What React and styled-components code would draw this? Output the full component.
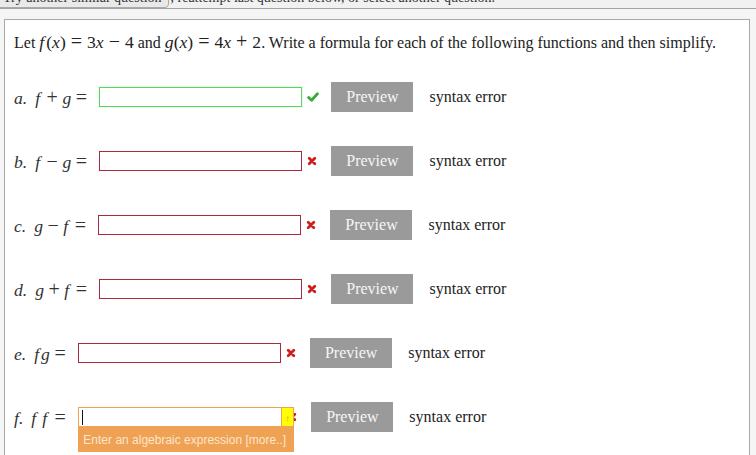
import React from 'react';
import styled, { createGlobalStyle } from 'styled-components';

const Global = createGlobalStyle`
  html, body { margin: 0; padding: 0; background: #f5f5f5; }
  body { font-family: "Liberation Serif", "Times New Roman", serif; overflow: hidden; }
`;

const Page = styled.div`
  width: 756px;
  height: 455px;
  overflow: hidden;
  background: #f5f5f5;
`;

const Strip = styled.div`
  height: 8px;
  overflow: hidden;
  border-bottom: 1px solid #a3a3a3;
  background: #f1f1f1;
  font-size: 14px;
  color: #333;
  white-space: nowrap;
`;

const StripLine = styled.div`
  margin-top: -12px;
  display: flex;
  align-items: center;
  line-height: 16px;
`;

const AgainButton = styled.span`
  border: 1px solid #aaa;
  border-radius: 4px;
  background: #e9e9e9;
  padding: 1px 6px;
  margin-left: -4px;
  margin-right: 2px;
`;

const Outer = styled.div`
  padding: 10px 6px 0 4px;
`;

const Box = styled.div`
  background: #fff;
  border: 1px solid #a8a8a8;
  border-bottom: none;
  padding: 11px 9px 0;
  height: 460px;
`;

const Question = styled.div`
  font-size: 16px;
  line-height: 20px;
  height: 20px;
  color: #222;
  white-space: nowrap;
`;

const Math = styled.span`
  font-size: 17.6px;
  line-height: 1;
  color: #222;
`;

const I = styled.i`
  font-style: italic;
  padding-right: ${(p) => p.$pr || 0}px;
`;

const Op = styled.span`
  font-size: 20px;
  line-height: 1;
  padding: 0 ${(p) => p.$sp ?? 4.5}px;
`;

const Rows = styled.div`
  margin-top: 31px;
  display: flex;
  flex-direction: column;
  gap: 34px;
`;

const Row = styled.div`
  display: flex;
  align-items: center;
  height: 30px;
`;

const Label = styled.span`
  font-size: 17.6px;
  line-height: 1;
  color: #333;
  margin-right: 8px;
  white-space: nowrap;
`;

const Letter = styled.i`
  font-style: italic;
  margin-right: 8px;
`;

const Field = styled.div`
  position: relative;
  width: ${(p) => p.$w || 203}px;
  height: 20px;
  box-sizing: border-box;
  background: #fff;
  border: 1px solid ${(p) => (p.$state === 'ok' ? '#5fd35f' : p.$state === 'focus' ? '#eda35a' : '#a8283c')};
  box-shadow: ${(p) => (p.$state === 'ok' ? '0 0 1px #8e8' : 'none')};
`;

const Cursor = styled.span`
  position: absolute;
  left: 3px;
  top: 2px;
  width: 1px;
  height: 15px;
  background: #111;
`;

const Yellow = styled.span`
  position: absolute;
  right: -13px;
  top: -1px;
  width: 12px;
  height: 20px;
  box-sizing: border-box;
  background: #ffff00;
  border: 1px solid #eda35a;
  border-left: none;
  z-index: 2;
  color: #e08a30;
  font-family: "Liberation Sans", sans-serif;
  font-size: 10px;
  line-height: 22px;
  text-align: center;
`;

const Tip = styled.div`
  position: absolute;
  left: -1px;
  top: 19px;
  width: 216px;
  height: 25px;
  box-sizing: border-box;
  background: #efa154;
  color: #fce6cc;
  font-family: "Liberation Sans", Arial, sans-serif;
  font-size: 12px;
  line-height: 26px;
  padding-left: 5px;
  white-space: nowrap;
  z-index: 3;
`;

const Mark = styled.span`
  width: 20px;
  margin-left: 5px;
  display: flex;
  align-items: center;
  height: 20px;
`;

const PreviewBtn = styled.button`
  margin-left: 4px;
  height: 30px;
  width: 82px;
  border: none;
  background: #9a9a9a;
  color: #f6f6f6;
  font-family: "Liberation Serif", serif;
  font-size: 16px;
  padding: 0;
`;

const Status = styled.span`
  margin-left: 16px;
  font-size: 16px;
  color: #222;
`;

const Check = () => (
  <svg width="12" height="10" viewBox="0 0 12 10">
    <path d="M1.6 5.4 L4.6 8.2 L10.4 1.8" fill="none" stroke="#3aaa3a" strokeWidth="2.8" strokeLinecap="round" strokeLinejoin="round" />
  </svg>
);

const Cross = () => (
  <svg width="10" height="10" viewBox="0 0 10 10">
    <path d="M2.2 2.2 L7.8 7.8 M7.8 2.2 L2.2 7.8" fill="none" stroke="#cc1f1f" strokeWidth="2.8" strokeLinecap="round" />
  </svg>
);

const F = ({ pr = 2 }) => <I $pr={pr}>f</I>;
const G = () => <I>g</I>;

const rows = [
  { key: 'a', expr: <><F /><Op>+</Op><G /><Op>=</Op></>, state: 'ok' },
  { key: 'b', expr: <><F /><Op>−</Op><G /><Op>=</Op></>, state: 'bad' },
  { key: 'c', expr: <><G /><Op>−</Op><F /><Op>=</Op></>, state: 'bad' },
  { key: 'd', expr: <><G /><Op>+</Op><F /><Op>=</Op></>, state: 'bad' },
  { key: 'e', expr: <><F /><G /><Op>=</Op></>, state: 'bad' },
  { key: 'f', expr: <><F pr={6} /><F pr={3} /><Op>=</Op></>, state: 'focus' },
];

export default function App() {
  return (
    <Page>
      <Global />
      <Strip>
        <StripLine>
          <AgainButton>Try another similar question</AgainButton>
          <span>, reattempt last question below, or select another question.</span>
        </StripLine>
      </Strip>
      <Outer>
        <Box>
          <Question>
            Let <Math><F />(<I>x</I>)<Op $sp={5}>=</Op>3<I>x</I><Op $sp={5}>−</Op>4</Math> and{' '}
            <Math><I>g</I>(<I>x</I>)<Op $sp={5}>=</Op>4<I>x</I><Op $sp={5}>+</Op>2</Math>. Write a formula for each of the following functions and then simplify.
          </Question>
          <Rows>
            {rows.map((r) => (
              <Row key={r.key}>
                <Label>
                  <Letter>{r.key}.</Letter>
                  {r.expr}
                </Label>
                <Field $state={r.state} $w={r.state === 'focus' ? 204 : 203}>
                  {r.state === 'focus' && (
                    <>
                      <Cursor />
                      <Yellow>↑</Yellow>
                      <Tip>Enter an algebraic expression [more..]</Tip>
                    </>
                  )}
                </Field>
                <Mark>{r.state === 'ok' ? <Check /> : <Cross />}</Mark>
                <PreviewBtn>Preview</PreviewBtn>
                <Status>syntax error</Status>
              </Row>
            ))}
          </Rows>
        </Box>
      </Outer>
    </Page>
  );
}
